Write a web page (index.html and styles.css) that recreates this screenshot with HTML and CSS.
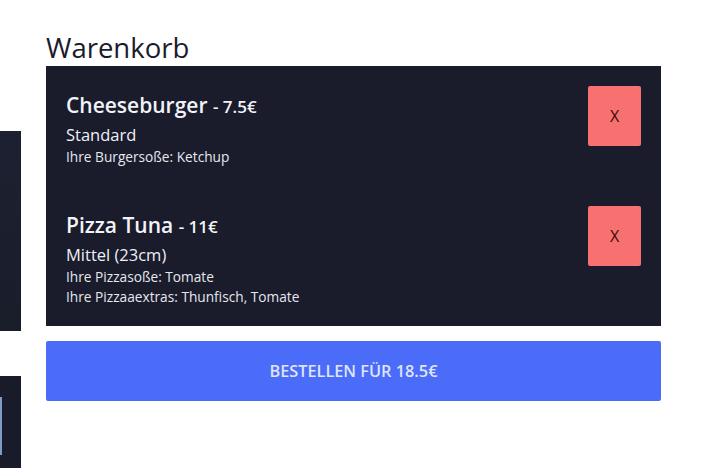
FILE: index.html
```html
<!DOCTYPE html>
<html lang="de">
<head>
<meta charset="utf-8">
<title>Warenkorb</title>
<link rel="stylesheet" href="styles.css">
</head>
<body>
<div class="page">
  <aside class="side">
    <div class="side-panel side-panel--top"></div>
    <div class="side-panel side-panel--bottom"><div class="side-edge"></div></div>
  </aside>
  <main class="cart">
    <h2 class="cart-title">Warenkorb</h2>
    <div class="cart-list">
      <div class="cart-item">
        <div class="item-info">
          <div class="item-name">Cheeseburger <span class="item-price">- 7.5€</span></div>
          <div class="item-size">Standard</div>
          <div class="item-detail">Ihre Burgersoße: Ketchup</div>
        </div>
        <button class="item-remove">X</button>
      </div>
      <div class="cart-item">
        <div class="item-info">
          <div class="item-name">Pizza Tuna <span class="item-price">- 11€</span></div>
          <div class="item-size">Mittel (23cm)</div>
          <div class="item-detail">Ihre Pizzasoße: Tomate</div>
          <div class="item-detail">Ihre Pizzaaextras: Thunfisch, Tomate</div>
        </div>
        <button class="item-remove">X</button>
      </div>
    </div>
    <button class="order-btn">Bestellen für 18.5€</button>
  </main>
</div>
</body>
</html>
```

FILE: styles.css
```css
html, body {
  margin: 0;
  padding: 0;
  overflow: hidden;
  background: #ffffff;
}

body {
  font-family: "Open Sans", "Noto Sans", sans-serif;
  color: #1a1b2b;
}

.page {
  display: grid;
  grid-template-columns: 21px 615px;
  column-gap: 25px;
  height: 468px;
}

.side {
  padding-top: 131px;
}

.side-panel {
  background: #1a1d2a;
}

.side-panel--top {
  height: 200px;
  margin-bottom: 45px;
  background: linear-gradient(180deg, #1c2030 0%, #1a1e2b 100%);
}

.side-panel--bottom {
  height: 92px;
  padding-top: 21px;
  box-sizing: border-box;
  background: #1a1b2a;
}

.side-edge {
  width: 2px;
  height: 58px;
  background: #7f9cc6;
}

.cart {
  padding-top: 30px;
}

.cart-title {
  margin: 0;
  font-size: 27.5px;
  line-height: 36px;
  font-weight: 400;
  color: #1a1b2b;
}

.cart-list {
  background: #1a1b2b;
}

.cart-item {
  display: flex;
  justify-content: space-between;
  align-items: flex-start;
  padding: 20px 20px 19px;
}

.item-info {
  padding-top: 1px;
  color: #eef0f6;
}

.item-name {
  height: 37px;
  font-size: 21px;
  line-height: 37px;
  font-weight: 600;
  color: #f2f3f8;
}

.item-price {
  font-size: 17px;
  line-height: 1;
  font-weight: 600;
}

.item-size {
  font-size: 16.5px;
  line-height: 22px;
  margin-bottom: 1px;
}

.item-detail {
  font-size: 13.7px;
  line-height: 20px;
  color: #e6e8ef;
}

.item-remove {
  width: 53px;
  height: 60px;
  border: none;
  border-radius: 2px;
  background: #f87171;
  color: #3d0c0c;
  font-family: "Open Sans", "Noto Sans", sans-serif;
  font-size: 16px;
  font-weight: 500;
  padding: 0;
}

.order-btn {
  display: block;
  width: 100%;
  height: 60px;
  margin-top: 15px;
  border: none;
  border-radius: 2px;
  background: #4b6cf8;
  color: #dfe4fb;
  font-family: "Open Sans", "Noto Sans", sans-serif;
  font-size: 16.3px;
  font-weight: 600;
  text-transform: uppercase;
  padding: 0;
}
```
